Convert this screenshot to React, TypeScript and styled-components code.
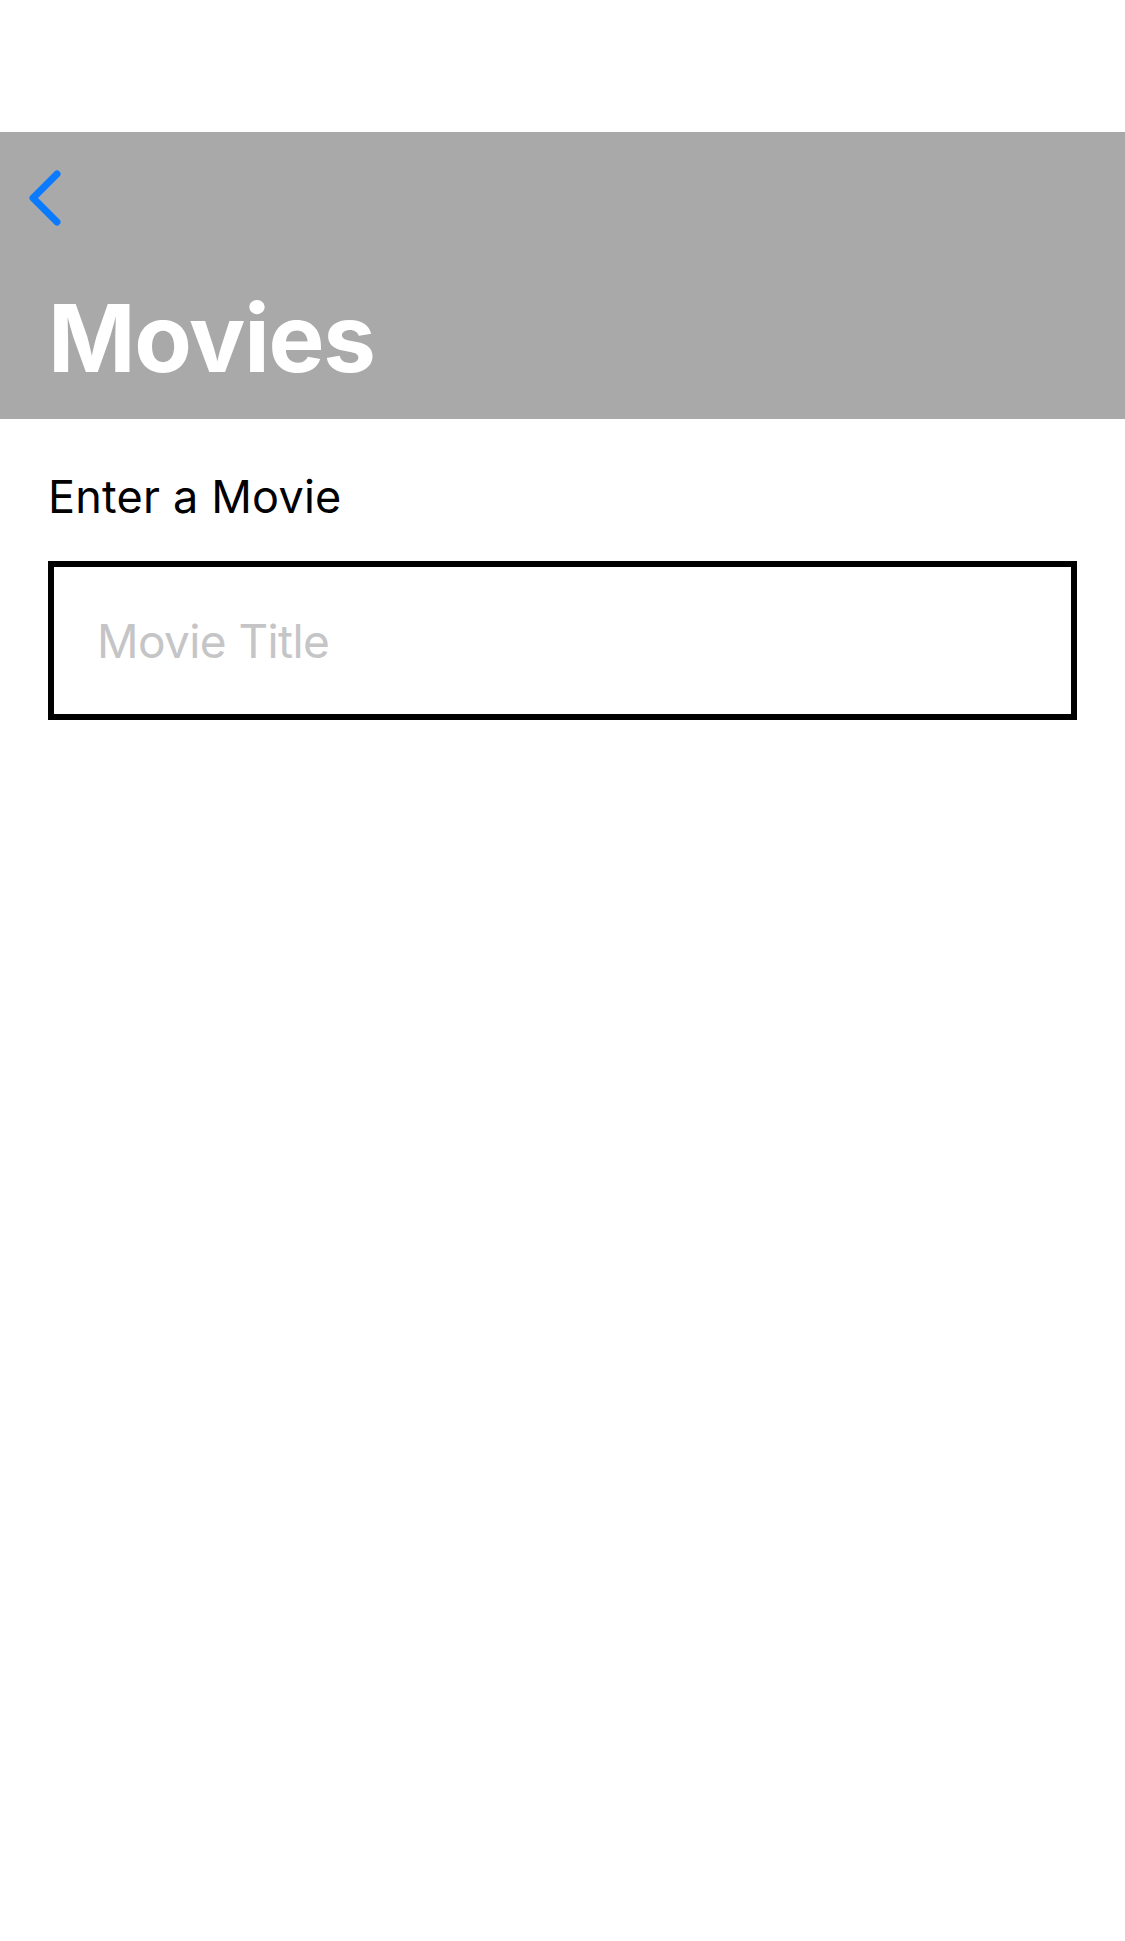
import React from "react";
import styled, { createGlobalStyle } from "styled-components";

const GlobalStyle = createGlobalStyle`
  html, body {
    margin: 0;
    padding: 0;
    background: #ffffff;
  }
  body {
    font-family: Inter, "Noto Sans", "Liberation Sans", sans-serif;
    -webkit-font-smoothing: antialiased;
  }
  * { box-sizing: border-box; }
`;

const Screen = styled.div`
  width: 1125px;
  min-height: 1941px;
  display: flex;
  flex-direction: column;
  background: #ffffff;
`;

const StatusArea = styled.div`
  height: 132px;
  flex: none;
`;

const Header = styled.header`
  height: 287px;
  flex: none;
  background: #a9a9a9;
  display: flex;
  flex-direction: column;
  padding: 36px 0 0 24px;
`;

const BackButton = styled.button`
  width: 40px;
  height: 60px;
  padding: 0;
  border: none;
  background: transparent;
  display: block;
  cursor: pointer;
`;

const Title = styled.h1`
  margin: 63px 0 0 24px;
  font-family: Inter, "Noto Sans", sans-serif;
  font-weight: 700;
  font-size: 94px;
  line-height: 94px;
  letter-spacing: -1.2px;
  color: #ffffff;
`;

const Content = styled.main`
  display: flex;
  flex-direction: column;
  padding: 0 48px;
`;

const Label = styled.label`
  margin-top: 55px;
  font-family: Inter, "Noto Sans", sans-serif;
  font-size: 45px;
  line-height: 45px;
  font-weight: 400;
  letter-spacing: 0.2px;
  color: #000000;
`;

const TitleInput = styled.input`
  margin-top: 42px;
  width: 1029px;
  height: 159px;
  border: 6px solid #000000;
  border-radius: 0;
  padding: 0 0 0 43px;
  font-family: Inter, "Noto Sans", sans-serif;
  font-size: 46px;
  letter-spacing: -0.6px;
  color: #000000;
  background: #ffffff;
  outline: none;
  &::placeholder {
    color: #c5c5c7;
  }
`;

const Chevron = () => (
  <svg width="40" height="60" viewBox="0 0 40 60" fill="none">
    <path
      d="M33 6 L9 30 L33 54"
      stroke="#0a7aff"
      strokeWidth="7"
      strokeLinecap="round"
      strokeLinejoin="round"
    />
  </svg>
);

export default function App() {
  return (
    <>
      <GlobalStyle />
      <Screen>
        <StatusArea />
        <Header>
          <BackButton aria-label="Back">
            <Chevron />
          </BackButton>
          <Title>Movies</Title>
        </Header>
        <Content>
          <Label htmlFor="movie">Enter a Movie</Label>
          <TitleInput id="movie" placeholder="Movie Title" />
        </Content>
      </Screen>
    </>
  );
}
